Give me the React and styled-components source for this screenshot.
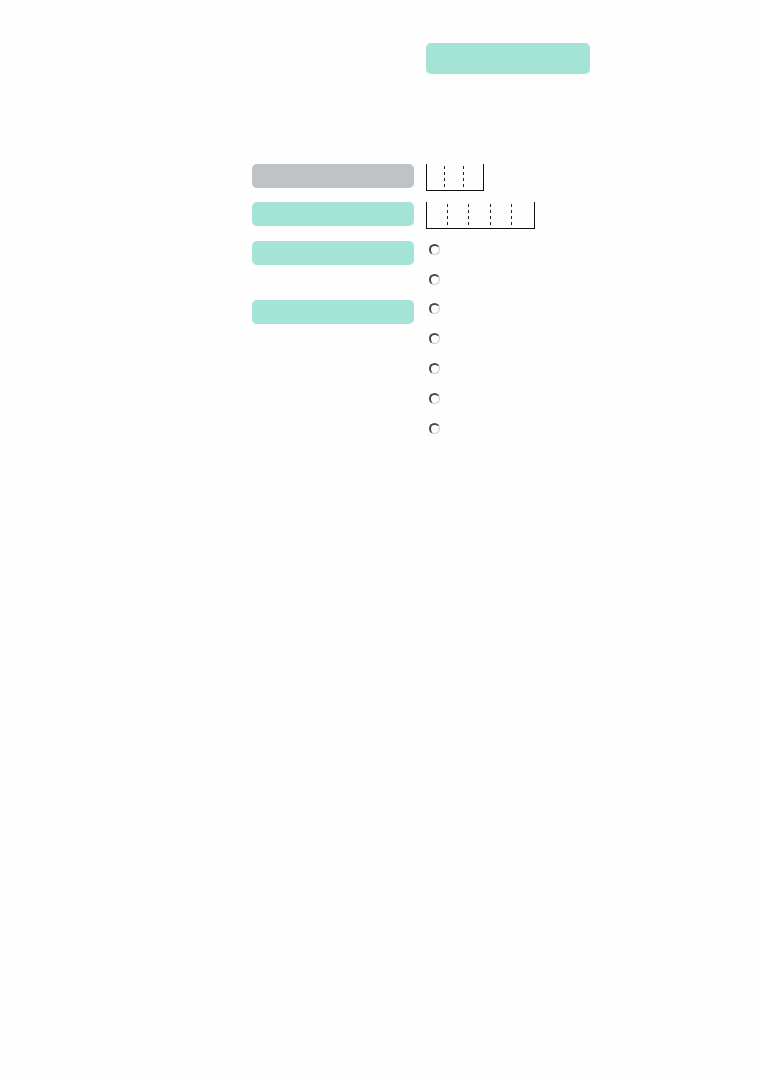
import React from "react";
import styled, { createGlobalStyle } from "styled-components";

const GlobalStyle = createGlobalStyle`
  body {
    margin: 0;
    background: #fefefe;
    font-family: "Liberation Sans", sans-serif;
  }
`;

const Form = styled.form`
  display: grid;
  grid-template-columns: 162px minmax(164px, 1fr);
  grid-template-rows: 121px 38px 39px 59px auto;
  column-gap: 12px;
  align-items: start;
  padding: 43px 24px 24px 252px;
`;

const Heading = styled.div`
  grid-column: 2;
  width: 164px;
  height: 31px;
  border-radius: 5px;
  background: #a4e4d7;
`;

const Label = styled.label`
  display: block;
  height: 24px;
  border-radius: 5px;
  background: ${({ $muted }) => ($muted ? "#bdc3c7" : "#a4e4d7")};
`;

const dash = (x) =>
  `linear-gradient(#222 50%, transparent 50%) ${x}px 0 / 1px 6px repeat-y content-box`;

const CombInput = styled.input`
  box-sizing: border-box;
  width: ${({ $width }) => $width}px;
  height: 27px;
  padding: 2px 0;
  border: 1px solid #111;
  border-top: 0;
  border-radius: 0;
  outline: none;
  font: 14px "Liberation Mono", monospace;
  background: ${({ $ticks }) => $ticks.map(dash).join(", ")};
`;

const RadioGroup = styled.div`
  display: flex;
  flex-direction: column;
  align-items: flex-start;
  gap: 19px;
  padding: 3px;
`;

const Radio = styled.input.attrs({ type: "radio" })`
  appearance: none;
  box-sizing: border-box;
  width: 11px;
  height: 11px;
  margin: 0;
  border-style: solid;
  border-width: 2px 1px 1px 2px;
  border-color: #484848 #ccc #ccc #484848;
  border-radius: 50%;
  background: #fff;

  &:checked {
    background: radial-gradient(#222 40%, #fff 50%);
  }
`;

const combs = [
  { id: "code", name: "Code", muted: true, width: 58, ticks: [17, 36] },
  { id: "number", name: "Number", width: 109, ticks: [20, 41, 63, 84] },
];

const choices = [
  { id: "type", name: "Type", count: 2 },
  { id: "category", name: "Category", count: 5 },
];

export default function App() {
  return (
    <>
      <GlobalStyle />
      <Form>
        <Heading />
        {combs.map(({ id, name, muted, width, ticks }) => (
          <React.Fragment key={id}>
            <Label htmlFor={id} $muted={muted} />
            <CombInput
              id={id}
              aria-label={name}
              maxLength={ticks.length + 1}
              $width={width}
              $ticks={ticks}
            />
          </React.Fragment>
        ))}
        {choices.map(({ id, name, count }) => (
          <React.Fragment key={id}>
            <Label htmlFor={`${id}-1`} />
            <RadioGroup role="radiogroup" aria-label={name}>
              {Array.from({ length: count }, (_, i) => (
                <Radio
                  key={i}
                  id={`${id}-${i + 1}`}
                  name={id}
                  value={i + 1}
                  aria-label={`${name} ${i + 1}`}
                />
              ))}
            </RadioGroup>
          </React.Fragment>
        ))}
      </Form>
    </>
  );
}
